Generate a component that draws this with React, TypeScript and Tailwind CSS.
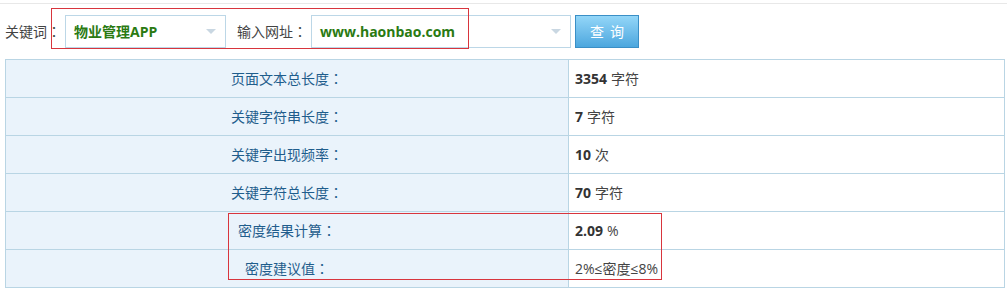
const rows: { label: string; value: string; unit: string; bold?: boolean }[] = [
  { label: "页面文本总长度", value: "3354", unit: "字符", bold: true },
  { label: "关键字符串长度", value: "7", unit: "字符", bold: true },
  { label: "关键字出现频率", value: "10", unit: "次", bold: true },
  { label: "关键字符总长度", value: "70", unit: "字符", bold: true },
  { label: "密度结果计算", value: "2.09", unit: "%", bold: true },
  { label: "密度建议值", value: "2%≤密度≤8%", unit: "" },
];

// full-width colon, centred in its cell the way YaHei draws it
function Colon() {
  return <span style={{ fontFamily: '"Noto Sans CJK TC", sans-serif' }}>：</span>;
}

function Caret() {
  return (
    <svg width="10" height="6" viewBox="0 0 10 6" className="shrink-0" aria-hidden="true">
      <path d="M0 0 L10 0 L5 5 Z" fill="#c9d7e2" />
    </svg>
  );
}

function FakeSelect({ value, width }: { value: string; width: string }) {
  return (
    <div
      className={`flex h-[33px] ${width} items-center justify-between border border-[#bcd7e7] bg-white pl-[8px] pr-[9px]`}
    >
      <span className="text-[14px] font-bold text-[#2a7a12]">{value}</span>
      <Caret />
    </div>
  );
}

export default function App() {
  return (
    <div
      className="relative h-[288px] w-[1007px] overflow-hidden bg-white text-[14px] text-[#333]"
      style={{ fontFamily: '"Open Sans", "Noto Sans CJK SC", sans-serif' }}
    >
      <div className="mt-[3px] border-t border-[#e8e8e8]" />

      {/* search form */}
      <div className="flex items-center pl-[5px] pt-[11px]">
        <span className="w-[60px] text-[#444]">
          关键词<Colon />
        </span>
        <FakeSelect value="物业管理APP" width="w-[161px]" />
        <span className="ml-[11px] w-[74px] text-[#444]">
          输入网址<Colon />
        </span>
        <FakeSelect value="www.haonbao.com" width="w-[260px]" />
        <button
          type="button"
          className="ml-[4px] h-[33px] w-[64px] border border-[#3a8fc6] bg-gradient-to-b from-[#93d6f8] to-[#4ba7de] pl-[6px] text-[14px] tracking-[6px] text-white"
        >
          查询
        </button>
      </div>

      {/* results */}
      <div className="ml-[5px] mt-[11px] w-[1000px] border-x border-t border-[#b9d5e4]">
        {rows.map((row) => (
          <div
            key={row.label}
            className="grid h-[38px] grid-cols-[563px_1fr] border-b border-[#b9d5e4]"
          >
            <div className="flex items-center justify-center border-r border-[#b9d5e4] bg-[#eaf3fb] text-[#1f5d8c]">
              {row.label}
              <Colon />
            </div>
            <div className="flex items-center pl-[6px]">
              {row.bold ? (
                <>
                  <span className="font-bold text-[#333]">{row.value}</span>
                  <span className="ml-[4px] text-[#444]">{row.unit}</span>
                </>
              ) : (
                <span className="text-[#444]">{row.value}</span>
              )}
            </div>
          </div>
        ))}
      </div>

      {/* highlight frames */}
      <div className="absolute left-[51px] top-[8px] h-[41px] w-[418px] border border-[#d8353d]" />
      <div className="absolute left-[228px] top-[213px] h-[67px] w-[434px] border border-[#d8353d]" />
    </div>
  );
}
